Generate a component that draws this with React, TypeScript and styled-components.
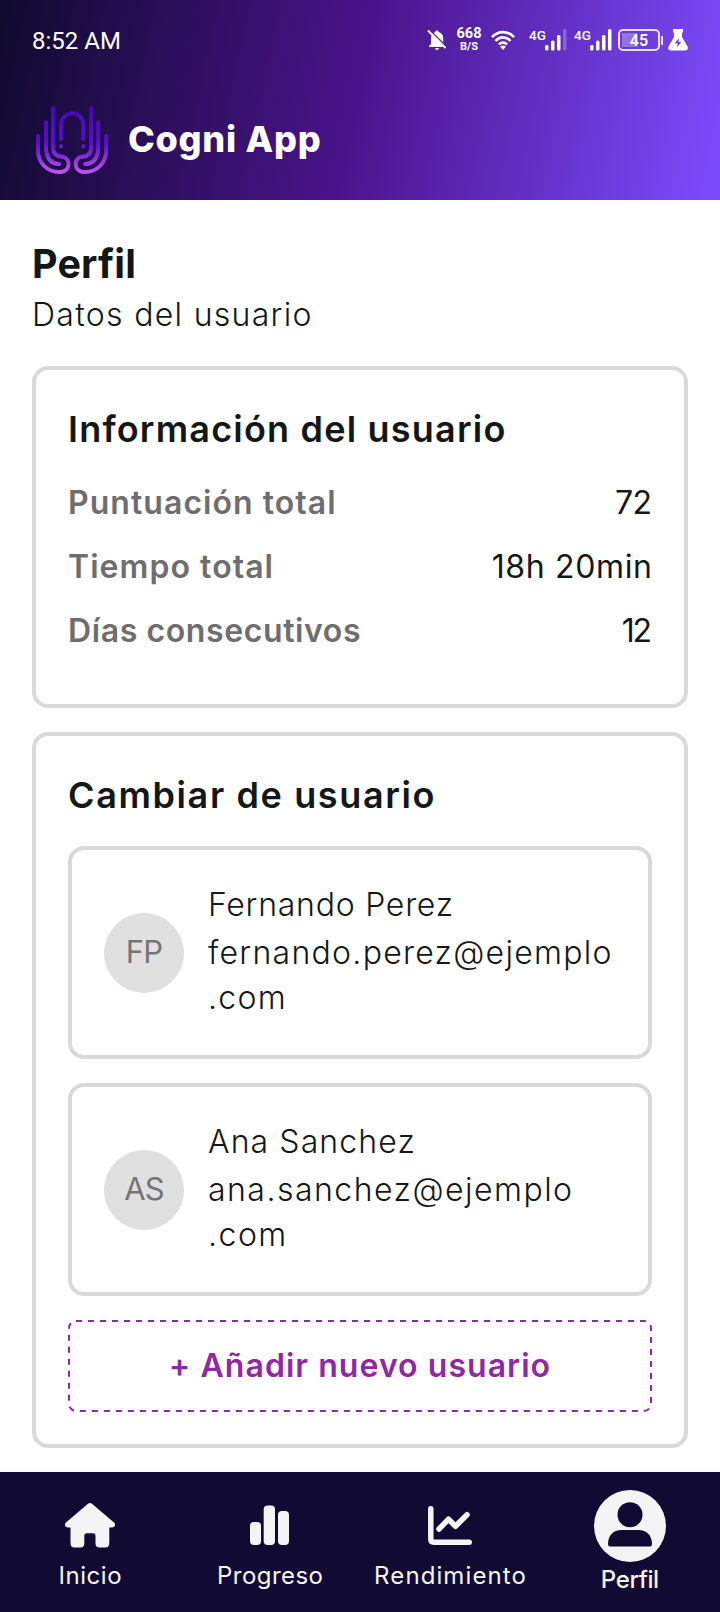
import React from 'react';
import styled, { createGlobalStyle } from 'styled-components';

const GlobalStyle = createGlobalStyle`
  * { box-sizing: border-box; }
  body { margin: 0; background: #fff; }
`;

const Screen = styled.div`
  width: 720px;
  height: 1612px;
  display: flex;
  flex-direction: column;
  font-family: Inter, sans-serif;
  color: #131718;
  overflow: hidden;
`;

const Header = styled.header`
  height: 200px;
  flex: none;
  background: linear-gradient(102deg, #0f0a2e 0%, #4a148c 50%, #7c4dff 100%);
`;

const StatusBar = styled.div`
  height: 80px;
  padding: 0 32px;
  display: flex;
  align-items: center;
  justify-content: space-between;
  font-family: Roboto, sans-serif;
  color: #fff;
`;

const Clock = styled.span`
  font-size: 24px;
  line-height: 28px;
  padding-top: 1px;
`;

const StatusIcons = styled.div`
  display: flex;
  align-items: center;
`;

const NetSpeed = styled.div`
  width: 26px;
  margin: 0 9px;
  padding-bottom: 2px;
  display: flex;
  flex-direction: column;
  align-items: center;
  font-weight: 700;
  font-size: 14.5px;
  line-height: 14px;
`;

const NetUnit = styled.span`
  font-size: 11px;
  line-height: 11px;
`;

const Signal = styled.div<{ $gap: number }>`
  display: flex;
  align-items: flex-start;
  height: 22px;
  margin-left: ${(p) => p.$gap}px;
  font-size: 13.5px;
  font-weight: 500;
  line-height: 12px;
  span { width: 16px; white-space: nowrap; }
`;

const Battery = styled.div`
  width: 42px;
  height: 22px;
  margin-left: 6px;
  border: 2px solid #eadfff;
  border-radius: 5px;
  background: linear-gradient(90deg, #9474de 0 15px, transparent 15px) 2px 2px / 34px 14px no-repeat;
  text-align: center;
  font-size: 16px;
  font-weight: 600;
  line-height: 19px;
`;

const BatteryTip = styled.div`
  width: 2px;
  height: 9px;
  margin: 0 5px 0 1px;
  background: #eadfff;
`;

const Brand = styled.div`
  height: 120px;
  padding: 0 32px;
  display: flex;
  align-items: center;
  gap: 16px;
  svg { display: block; }
`;

const BrandName = styled.span`
  padding-bottom: 2px;
  font-size: 36px;
  font-weight: 800;
  line-height: 44px;
  letter-spacing: 0.75px;
  color: #fff;
`;

const Main = styled.main`
  flex: 1;
  min-height: 0;
  padding: 36px 32px 0;
`;

const PageTitle = styled.h1`
  margin: 0;
  font-size: 39.5px;
  font-weight: 700;
  line-height: 56px;
  letter-spacing: 0.15px;
`;

const Subtitle = styled.p`
  margin: 0 0 28px;
  font-size: 32px;
  font-weight: 340;
  line-height: 46px;
  letter-spacing: 1.3px;
`;

const Card = styled.section<{ $bottom: number }>`
  border: 4px solid #d9d9d9;
  border-radius: 16px;
  padding: 32px 32px ${(p) => p.$bottom}px;
  & + & { margin-top: 24px; }
`;

const CardTitle = styled.h2<{ $gap: number; $track: number }>`
  margin: 0 0 ${(p) => p.$gap}px;
  font-size: 36px;
  font-weight: 600;
  line-height: 54px;
  letter-spacing: ${(p) => p.$track}px;
`;

const StatRow = styled.div`
  display: flex;
  justify-content: space-between;
  line-height: 48px;
  & + & { margin-top: 16px; }
`;

const StatLabel = styled.span<{ $track: number }>`
  font-size: 32px;
  font-weight: 600;
  letter-spacing: ${(p) => p.$track}px;
  color: #6e6e6e;
`;

const StatValue = styled.span<{ $track: number }>`
  font-size: 32px;
  font-weight: 400;
  letter-spacing: ${(p) => p.$track}px;
  margin-right: ${(p) => -p.$track}px;
`;

const UserCard = styled.div`
  display: flex;
  align-items: center;
  gap: 24px;
  padding: 32px;
  margin-bottom: 24px;
  border: 4px solid #d9d9d9;
  border-radius: 16px;
`;

const Avatar = styled.div`
  width: 80px;
  height: 80px;
  flex: none;
  border-radius: 50%;
  background: #e0e0e0;
  color: #757575;
  font-size: 31px;
  font-weight: 400;
  line-height: 78px;
  letter-spacing: -0.8px;
  text-align: center;
`;

const UserText = styled.div`
  flex: 1;
  min-width: 0;
  padding-bottom: 3px;
  font-size: 32px;
  font-weight: 340;
`;

const UserName = styled.div<{ $track: number }>`
  line-height: 46px;
  margin-bottom: 2px;
  letter-spacing: ${(p) => p.$track}px;
`;

const UserEmail = styled.div<{ $track: number }>`
  line-height: 45px;
  letter-spacing: ${(p) => p.$track}px;
`;

const AddButton = styled.button`
  position: relative;
  display: block;
  width: 100%;
  height: 92px;
  padding: 0;
  border: 0;
  background: none;
  font: 600 32px/90px Inter, sans-serif;
  letter-spacing: 1.05px;
  color: #9127a6;
`;

const DashedOutline = styled.svg`
  position: absolute;
  inset: 0;
  width: 100%;
  height: 100%;
  pointer-events: none;
`;

const Nav = styled.nav`
  height: 144px;
  flex: none;
  display: grid;
  grid-template-columns: repeat(4, 1fr);
  border-top: 4px solid #fbfbfb;
  background: #110a33;
  background-clip: padding-box;
`;

const NavItem = styled.a<{ $active?: boolean }>`
  display: flex;
  flex-direction: column;
  align-items: center;
  padding-top: ${(p) => (p.$active ? 18 : 30)}px;
  gap: ${(p) => (p.$active ? 4 : 14)}px;
  color: #f5f5f5;
  font-size: 24px;
  font-weight: ${(p) => (p.$active ? 500 : 400)};
  line-height: 28px;
  svg { display: block; }
`;

const NavLabel = styled.span<{ $track: number }>`
  letter-spacing: ${(p) => p.$track}px;
  margin-right: ${(p) => -p.$track}px;
`;

const Logo = () => (
  <svg width="80" height="80" viewBox="12 10 80 80" fill="none" stroke="url(#brand)" strokeWidth="4" strokeLinecap="round">
    <defs>
      <linearGradient id="brand" gradientUnits="userSpaceOnUse" x1="0" y1="16" x2="0" y2="84">
        <stop offset="0" stopColor="#4507b8" />
        <stop offset=".55" stopColor="#5610c8" />
        <stop offset="1" stopColor="#c455ee" />
      </linearGradient>
      <g id="hand">
        <path d="M33 18V57Q33 66 41 66.5C51.500 67 51 82 40 82C26 82 18 72 18 60V46" />
        <path d="M26 32V59Q27 73.500 39 74" />
      </g>
    </defs>
    <path d="M41 49V34.500A11.150 11.150 0 0 1 63.300 34.500V49M41 56v.4M63.300 56v.4" />
    <use href="#hand" />
    <use href="#hand" transform="translate(104.200 0) scale(-1 1)" />
  </svg>
);

const BellOff = () => (
  <svg width="20" height="22" viewBox="0 0 20 22">
    <path fill="#fff" d="M10 1.500c1 0 1.600.7 1.600 1.600 3 .8 4.600 3.300 4.600 6.400v5.500l2 2v1H2v-1l2-2V9.500C4 6.300 5.500 3.900 8.400 3.100c0-.9.600-1.600 1.600-1.600zM8 19h4a2 2 0 0 1-4 0z" />
    <path stroke="#5820a4" strokeWidth="1.600" d="M2.500 1 20 18" />
    <path stroke="#fff" strokeWidth="1.800" d="M1 1.500 18.500 19" />
  </svg>
);

const Wifi = () => (
  <svg width="24" height="20" viewBox="0 0 24 20" fill="none" stroke="#fff" strokeWidth="2.600">
    <path d="M1 7.200C7 .4 17 .4 23 7.200M4.500 11C8.700 6.200 15.300 6.200 19.500 11M8 14.500c2.300-2.600 5.700-2.600 8 0" />
    <path fill="#fff" stroke="none" d="M12 20 9 16.500q3-2.200 6 0z" />
  </svg>
);

const Bars = ({ last }: { last: number }) => (
  <svg width="22" height="22" viewBox="0 0 22 22" fill="#fff">
    <rect x="0" y="16" width="3.500" height="5.500" rx="1.500" />
    <rect x="6" y="11.500" width="3.500" height="10" rx="1.500" />
    <rect x="12" y="6" width="3.500" height="15.500" rx="1.500" />
    <rect x="18" y="0" width="3.500" height="21.500" rx="1.500" opacity={last} />
  </svg>
);

const Flask = () => (
  <svg width="20" height="22" viewBox="0 0 20 22">
    <path fill="#fff" d="M5 0h10v3.500h-1V8l5.500 9.500q1.300 3.500-2 4h-15q-3.300-.5-2-4L6 8V3.500H5z" />
    <path fill="#6a3fdc" d="M11 9 6.800 14.300H9.500l-.5 4L13.200 13H10.500z" />
  </svg>
);

const HomeIcon = () => (
  <svg width="50" height="46" viewBox="0 0 50 46" fill="#f4f4f4">
    <path d="M23 1.800Q25 0 27 1.800L49 20.500Q50.500 22 50 23.500Q49.300 25.500 47 25.500H44.300V41Q44.300 45.500 40 45.500H34.500Q30.500 45.500 30.500 41.500V34Q30.500 31.300 28 31.300H22Q19.300 31.300 19.300 34V41.500Q19.300 45.500 15.500 45.500H9.500Q5.500 45.500 5.500 41V25.500H3Q.7 25.500 0 23.500Q-.5 22 1 20.500z" />
  </svg>
);

const BarsIcon = () => (
  <svg width="40" height="46" viewBox="0 0 40 46" fill="#f4f4f4">
    <rect x="0" y="20" width="11" height="23" rx="4" />
    <rect x="13.700" y="3.500" width="11.300" height="39.500" rx="4" />
    <rect x="28" y="9" width="11" height="34" rx="4" />
  </svg>
);

const LineIcon = () => (
  <svg width="44" height="46" viewBox="0 0 44 46" fill="none" stroke="#f4f4f4" strokeLinecap="round" strokeLinejoin="round" strokeWidth="5.500">
    <path d="M2.800 6.800V37Q2.800 40.200 6 40.200H41.200" />
    <path d="M11 27 20.500 17.200 27.500 24.300 39 12.700" />
  </svg>
);

const ProfileIcon = () => (
  <svg width="72" height="72" viewBox="0 0 72 72">
    <circle cx="36" cy="36" r="36" fill="#f4f4f4" />
    <circle cx="36" cy="24.700" r="12.500" fill="#110a33" />
    <path fill="#110a33" d="M14 54C14 45 20 40 27 40H45C52 40 58 45 58 54Q58 56.500 56 56.500H16Q14 56.500 14 54z" />
  </svg>
);

export default function App() {
  return (
    <Screen>
      <GlobalStyle />
      <Header>
        <StatusBar>
          <Clock>8:52 AM</Clock>
          <StatusIcons>
            <BellOff />
            <NetSpeed>668<NetUnit>B/S</NetUnit></NetSpeed>
            <Wifi />
            <Signal $gap={14}><span>4G</span><Bars last={0.25} /></Signal>
            <Signal $gap={7}><span>4G</span><Bars last={1} /></Signal>
            <Battery>45</Battery>
            <BatteryTip />
            <Flask />
          </StatusIcons>
        </StatusBar>
        <Brand>
          <Logo />
          <BrandName>Cogni App</BrandName>
        </Brand>
      </Header>
      <Main>
        <PageTitle>Perfil</PageTitle>
        <Subtitle>Datos del usuario</Subtitle>
        <Card $bottom={49}>
          <CardTitle $gap={23} $track={1.2}>Información del usuario</CardTitle>
          <StatRow>
            <StatLabel $track={1.05}>Puntuación total</StatLabel>
            <StatValue $track={-0.5}>72</StatValue>
          </StatRow>
          <StatRow>
            <StatLabel $track={1.05}>Tiempo total</StatLabel>
            <StatValue $track={0.65}>18h 20min</StatValue>
          </StatRow>
          <StatRow>
            <StatLabel $track={0.6}>Días consecutivos</StatLabel>
            <StatValue $track={-2.3}>12</StatValue>
          </StatRow>
        </Card>
        <Card $bottom={32}>
          <CardTitle $gap={24} $track={1.62}>Cambiar de usuario</CardTitle>
          <UserCard>
            <Avatar>FP</Avatar>
            <UserText>
              <UserName $track={0.75}>Fernando Perez</UserName>
              <UserEmail $track={1.28}>fernando.perez@ejemplo<wbr />.com</UserEmail>
            </UserText>
          </UserCard>
          <UserCard>
            <Avatar>AS</Avatar>
            <UserText>
              <UserName $track={1.1}>Ana Sanchez</UserName>
              <UserEmail $track={1.48}>ana.sanchez@ejemplo<wbr />.com</UserEmail>
            </UserText>
          </UserCard>
          <AddButton>
            <DashedOutline viewBox="0 0 584 92" aria-hidden="true">
              <rect x="1" y="1" width="582" height="90" rx="7" fill="none" stroke="#9127a6" strokeWidth="2" strokeDasharray="6 6" />
            </DashedOutline>
            + Añadir nuevo usuario
          </AddButton>
        </Card>
      </Main>
      <Nav>
        <NavItem><HomeIcon /><NavLabel $track={0.55}>Inicio</NavLabel></NavItem>
        <NavItem><BarsIcon /><NavLabel $track={0.45}>Progreso</NavLabel></NavItem>
        <NavItem><LineIcon /><NavLabel $track={1.1}>Rendimiento</NavLabel></NavItem>
        <NavItem $active><ProfileIcon /><NavLabel $track={-0.4}>Perfil</NavLabel></NavItem>
      </Nav>
    </Screen>
  );
}
